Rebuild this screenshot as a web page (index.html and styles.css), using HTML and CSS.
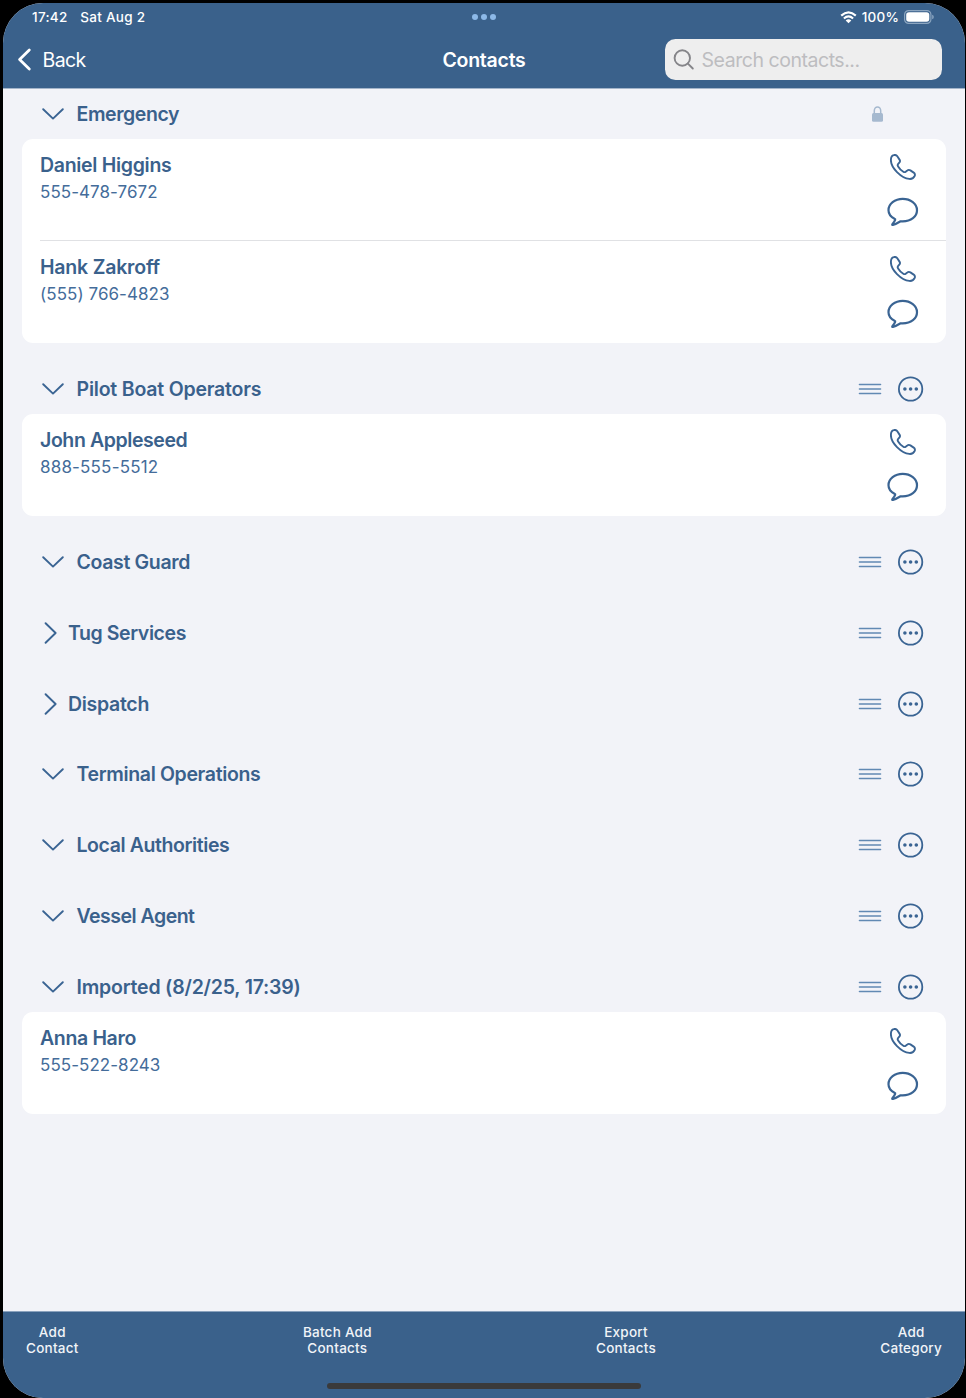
FILE: index.html
```
<!DOCTYPE html>
<html lang="en">
<head>
<meta charset="utf-8">
<title>Contacts</title>
<link rel="stylesheet" href="styles.css">
</head>
<body>
<svg class="defs" width="0" height="0" aria-hidden="true">
  <symbol id="down" viewBox="0 0 22 12"><path d="M1.2 1.2 11 10.6 20.8 1.2"/></symbol>
  <symbol id="right" viewBox="0 0 13 22"><path d="M1.6 1.2 11.6 11 1.6 20.8"/></symbol>
  <symbol id="phone" viewBox="0 0 26 26"><path d="M3.700 1.100C5.100.700 6.400 1 7.300 2.300L9.500 5.600C10.300 6.800 10.200 7.700 9.300 8.700L8.200 9.900C7.500 10.700 7.500 11.500 8.100 12.400 9.300 14.400 11.300 16.500 13.300 17.700 14.200 18.300 15 18.300 15.700 17.700L17.300 16.500C18.300 15.700 19.300 15.700 20.400 16.400L23.700 18.600C24.900 19.500 25.200 20.600 24.700 21.900 23.800 24 21.800 25.100 19.300 24.900 15.300 24.600 10.800 21.900 7 18.100 3.300 14.400.900 9.900.900 6.100.900 3.400 2 1.500 3.700 1.100Z"/></symbol>
  <symbol id="chat" viewBox="0 0 32 30"><path d="M15.700 1.900C23.600 1.900 30 6.800 30 13.200 30 19.600 24 24.400 15.700 24.400 14.900 24.400 14.200 24.400 13.500 24.300 11.300 25.600 8.500 27.400 5.900 28 5.200 28.100 5 27.600 5.400 27.100 6.500 25.700 7.700 24 8.200 22.800 8.400 22.300 8.100 22 7.500 21.700 3.700 19.700 1.500 16.800 1.500 13.200 1.500 6.900 7.800 1.900 15.700 1.900Z"/></symbol>
  <symbol id="grip" viewBox="0 0 24 12"><path d="M1.500 1.500H22.500M1.500 6H22.500M1.500 10.500H22.500"/></symbol>
  <symbol id="more" viewBox="0 0 26 26"><circle cx="12.600" cy="13" r="11.700"/><g class="dots"><circle cx="6.900" cy="13" r="1.800"/><circle cx="12.600" cy="13" r="1.800"/><circle cx="18.300" cy="13" r="1.800"/></g></symbol>
</svg>
<div class="screen">
  <header class="top">
    <div class="status">
      <div class="status-left"><span class="time">17:42</span><span class="date">Sat Aug 2</span></div>
      <svg class="multitask" width="26" height="8" viewBox="0 0 26 8"><circle cx="4" cy="4" r="3"/><circle cx="13" cy="4" r="3"/><circle cx="22" cy="4" r="3"/></svg>
      <div class="status-right">
        <svg class="wifi" width="17" height="13" viewBox="0 0 17 13"><path d="M1.200 4.600Q8.500-2 15.800 4.600M3.900 7.500Q8.500 3.400 13.100 7.500"/><path class="solid" d="M5.700 9.400Q8.500 7.100 11.300 9.400L8.500 12.300Z"/></svg>
        <span class="percent">100%</span>
        <svg class="battery" width="30" height="14" viewBox="0 0 30 14"><rect class="case" x=".6" y=".6" width="26.300" height="12.800" rx="4"/><rect class="charge" x="2.200" y="2.200" width="23.100" height="9.600" rx="2.800"/><path class="nub" d="M28.200 4.700Q29.800 5.300 29.800 7T28.200 9.300Z"/></svg>
      </div>
    </div>
    <div class="nav">
      <div class="back"><svg width="15" height="23" viewBox="0 0 15 23"><path d="M12.300 2 2.600 11.500 12.300 21"/></svg><span>Back</span></div>
      <h1 class="title">Contacts</h1>
      <div class="search"><svg width="22" height="22" viewBox="0 0 22 22"><circle cx="9.300" cy="9" r="7.700"/><path d="M14.900 14.600 19.800 19.500"/></svg><span>Search contacts...</span></div>
    </div>
  </header>
  <main class="list">
    <section>
      <div class="head"><svg class="icon down"><use href="#down"/></svg><h2 class="snug">Emergency</h2>
        <svg class="lock" width="11" height="16" viewBox="0 0 11 16"><path d="M2.300 8V4.700a3.200 3.700 0 0 1 6.400 0V8"/><rect x="0" y="7" width="11" height="8.800" rx="1.500"/></svg></div>
      <div class="card">
        <div class="row"><div class="person"><h3>Daniel Higgins</h3><p>555-478-7672</p></div><div class="acts"><svg class="icon phone"><use href="#phone"/></svg><svg class="icon chat"><use href="#chat"/></svg></div></div>
        <div class="row"><div class="person"><h3 class="loose">Hank Zakroff</h3><p>(555) 766-4823</p></div><div class="acts"><svg class="icon phone"><use href="#phone"/></svg><svg class="icon chat"><use href="#chat"/></svg></div></div>
      </div>
    </section>
    <section>
      <div class="head"><svg class="icon down"><use href="#down"/></svg><h2 class="loose">Pilot Boat Operators</h2><svg class="icon grip"><use href="#grip"/></svg><svg class="icon more"><use href="#more"/></svg></div>
      <div class="card">
        <div class="row"><div class="person"><h3 class="snug">John Appleseed</h3><p class="wide">888-555-5512</p></div><div class="acts"><svg class="icon phone"><use href="#phone"/></svg><svg class="icon chat"><use href="#chat"/></svg></div></div>
      </div>
    </section>
    <section><div class="head"><svg class="icon down"><use href="#down"/></svg><h2 class="mid">Coast Guard</h2><svg class="icon grip"><use href="#grip"/></svg><svg class="icon more"><use href="#more"/></svg></div></section>
    <section><div class="head"><svg class="icon right"><use href="#right"/></svg><h2 class="snug">Tug Services</h2><svg class="icon grip"><use href="#grip"/></svg><svg class="icon more"><use href="#more"/></svg></div></section>
    <section><div class="head"><svg class="icon right"><use href="#right"/></svg><h2>Dispatch</h2><svg class="icon grip"><use href="#grip"/></svg><svg class="icon more"><use href="#more"/></svg></div></section>
    <section><div class="head"><svg class="icon down"><use href="#down"/></svg><h2 class="mid">Terminal Operations</h2><svg class="icon grip"><use href="#grip"/></svg><svg class="icon more"><use href="#more"/></svg></div></section>
    <section><div class="head"><svg class="icon down"><use href="#down"/></svg><h2 class="snug">Local Authorities</h2><svg class="icon grip"><use href="#grip"/></svg><svg class="icon more"><use href="#more"/></svg></div></section>
    <section><div class="head"><svg class="icon down"><use href="#down"/></svg><h2 class="tight">Vessel Agent</h2><svg class="icon grip"><use href="#grip"/></svg><svg class="icon more"><use href="#more"/></svg></div></section>
    <section>
      <div class="head"><svg class="icon down"><use href="#down"/></svg><h2 class="loose">Imported (8/2/25, 17:39)</h2><svg class="icon grip"><use href="#grip"/></svg><svg class="icon more"><use href="#more"/></svg></div>
      <div class="card">
        <div class="row"><div class="person"><h3 class="mid">Anna Haro</h3><p>555-522-8243</p></div><div class="acts"><svg class="icon phone"><use href="#phone"/></svg><svg class="icon chat"><use href="#chat"/></svg></div></div>
      </div>
    </section>
  </main>
  <footer class="bottom">
    <div class="tools"><div>Add<br>Contact</div><div>Batch Add<br>Contacts</div><div>Export<br>Contacts</div><div>Add<br>Category</div></div>
    <div class="home"></div>
  </footer>
</div>
</body>
</html>
```
FILE: styles.css
```
* { box-sizing: border-box; }
body { margin: 0; background: #000; font-family: Inter, "Liberation Sans", sans-serif; color: #3a618c; }
h1, h2, h3, p { margin: 0; }
svg { display: block; flex: none; }
.defs { position: absolute; }
.screen { height: 1395px; margin: 3px 1px 0 3px; border-radius: 40px; overflow: hidden; background: #f2f3f8; display: flex; flex-direction: column; }

.top { height: 86px; flex: none; background: #3a618b; border-bottom: 1px solid #a4b5ca; color: #fff; }
.status { height: 28px; display: grid; grid-template-columns: 1fr auto 1fr; align-items: center; padding: 0 30px 0 29px; font-size: 13.500px; font-weight: 500; letter-spacing: .3px; }
.status-left { display: flex; gap: 12.500px; }
.status-right { display: flex; align-items: center; justify-content: flex-end; gap: 5px; padding-right: 1px; }
.percent { letter-spacing: .2px; }
.multitask { fill: #8db9e8; }
.wifi { fill: none; stroke: #fff; stroke-width: 2.100; }
.wifi .solid { fill: #fff; stroke: none; }
.battery .case { fill: none; stroke: #8ba5c0; stroke-width: 1.200; }
.battery .charge { fill: #fff; }
.battery .nub { fill: #8ba5c0; }
.nav { height: 57px; display: grid; grid-template-columns: 276px 1fr 277px; align-items: center; padding: 0 23px 0 14px; }
.back { display: flex; align-items: center; gap: 10.500px; font-size: 19.500px; letter-spacing: -.6px; }
.back svg { fill: none; stroke: #fff; stroke-width: 2.800; stroke-linecap: round; stroke-linejoin: round; }
.title { font-size: 19.500px; font-weight: 600; text-align: center; padding-left: 10px; letter-spacing: -.25px; }
.search { height: 41.500px; border-radius: 10.500px; background: #eee; display: flex; align-items: center; gap: 6.500px; padding-left: 8px; font-size: 19.500px; letter-spacing: -.46px; color: #bdbdc0; }
.search svg { fill: none; stroke: #858589; stroke-width: 1.900; stroke-linecap: round; }

.list { flex: 1; margin-top: -1px; padding: 0 19px; display: flex; flex-direction: column; gap: 20px; }
.head { height: 50.900px; display: flex; align-items: center; padding: 1px 22.500px 0 20px; }
.head h2 { flex: 1; font-size: 19.500px; font-weight: 600; line-height: 24px; }
h2, h3 { letter-spacing: -.3px; }
.loose { letter-spacing: -.2px; }
.mid { letter-spacing: -.35px; }
.snug { letter-spacing: -.41px; }
.tight { letter-spacing: -.5px; }
.icon { fill: none; stroke: #3a6493; stroke-width: 1.900; stroke-linecap: round; stroke-linejoin: round; }
.down { width: 22px; height: 12px; margin-right: 12.500px; }
.right { width: 13px; height: 22px; margin: 0 11px 0 2px; }
.grip { width: 24px; height: 12px; stroke: #6189b3; stroke-width: 1.600; margin-right: 15.500px; }
.more { width: 26px; height: 26px; stroke-width: 1.800; }
.dots { fill: #3a6493; stroke: none; }
.lock { fill: #a6b9cf; margin-right: 40.500px; }
.lock path { fill: none; stroke: #a6b9cf; stroke-width: 1.500; }
.card { background: #fff; border-radius: 11px; padding-left: 18px; }
.row { height: 102px; display: flex; justify-content: space-between; padding: 14px 27px 0 0; }
.row + .row { box-shadow: 0 -1px #e0e1e4; }
.row h3 { font-size: 19.500px; font-weight: 600; line-height: 24px; }
.row p { font-size: 17px; line-height: 21px; margin-top: 5px; color: #446c9a; letter-spacing: .05px; }
.row .wide { letter-spacing: .18px; }
.acts { display: flex; flex-direction: column; align-items: center; width: 32px; padding-top: 1.500px; }
.phone { width: 26px; height: 26px; }
.chat { width: 32px; height: 30px; margin-top: 17px; stroke-width: 2.200; }

.bottom { height: 87px; flex: none; background: #3a618b; border-top: 1px solid #8aa2bd; color: #f1f4f8; display: flex; flex-direction: column; align-items: center; justify-content: space-between; padding: 12px 23px 9px; }
.tools { width: 100%; display: flex; justify-content: space-between; text-align: center; font-size: 13.500px; line-height: 16px; font-weight: 500; letter-spacing: .25px; }
.home { width: 314px; height: 6px; border-radius: 3px; background: #3a3a3b; }
```
